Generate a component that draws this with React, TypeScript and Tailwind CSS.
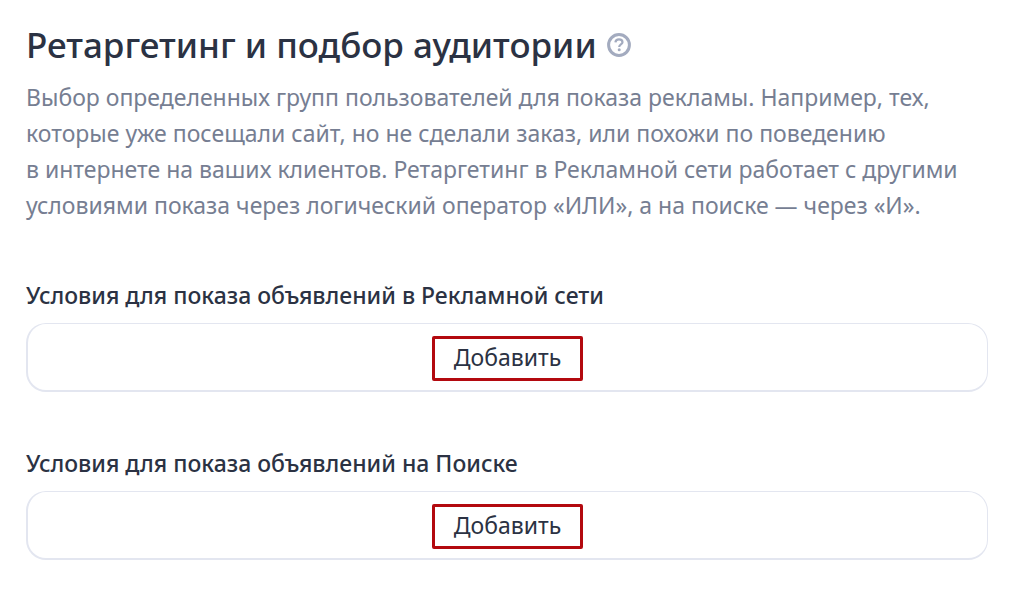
import { useId } from 'react'

interface ConditionSectionProps {
  title: string
}

function HelpIcon() {
  return (
    <svg width="24" height="24" viewBox="0 0 24 24" fill="none" stroke="#a3abbf" strokeWidth="3" aria-hidden="true">
      <circle cx="12" cy="12" r="10.4" />
      <path d="M8.4 9.4c.2-1.9 1.6-3 3.6-3 2.1 0 3.5 1.1 3.5 2.8 0 2.3-3.3 2.2-3.3 4.8" strokeWidth="2.2" />
      <circle cx="12.2" cy="16.8" r="1.5" fill="#a3abbf" stroke="none" />
    </svg>
  )
}

function ConditionSection({ title }: ConditionSectionProps) {
  const id = useId()

  return (
    <section aria-labelledby={id}>
      <h2 id={id} className="text-[23px] leading-8 font-medium">
        {title}
      </h2>
      <div className="mt-3 flex justify-center rounded-[20px] border border-b-2 border-l-2 border-[#e3e6f0] pt-3 pb-[9px]">
        <button type="button" className="h-[45px] rounded-xs border-3 border-[#b3090f] px-[19px] pb-1 text-[23px] leading-8">
          Добавить
        </button>
      </div>
    </section>
  )
}

export default function App() {
  return (
    <main className="min-h-screen bg-white pt-[23px] pr-[22px] pb-8 pl-[26px] font-['Noto_Sans',sans-serif] text-[#2b3243]">
      <header>
        <div className="flex items-center gap-[10px]">
          <h1 className="text-[35px] leading-[44px] font-medium">Ретаргетинг и подбор аудитории</h1>
          <button type="button" aria-label="Справка">
            <HelpIcon />
          </button>
        </div>
        <p className="mt-3 text-[23px] leading-9 text-[#767e92]">
          Выбор определенных групп пользователей для показа рекламы. Например, тех,
          <br />
          которые уже посещали сайт, но не сделали заказ, или похожи по поведению
          <br />
          в интернете на ваших клиентов. Ретаргетинг в Рекламной сети работает с другими
          <br />
          условиями показа через логический оператор «ИЛИ», а на поиске — через «И».
        </p>
      </header>
      <div className="mt-14 space-y-[55px]">
        <ConditionSection title="Условия для показа объявлений в Рекламной сети" />
        <ConditionSection title="Условия для показа объявлений на Поиске" />
      </div>
    </main>
  )
}
